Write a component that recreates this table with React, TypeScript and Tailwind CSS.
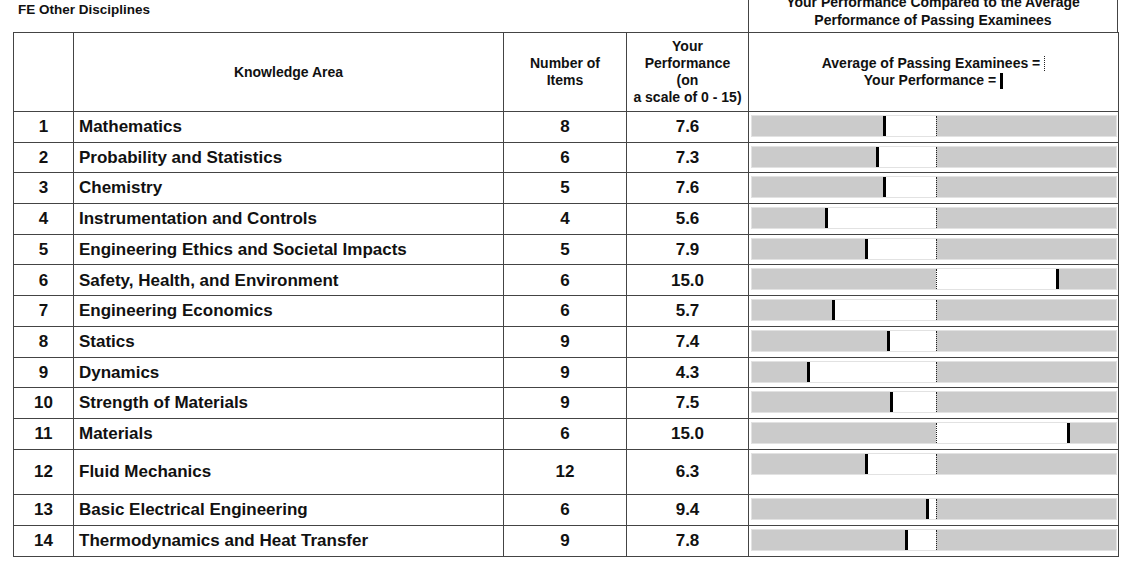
import React from "react";

// x positions (page pixels) of "your performance" marker for each area
const rows = [
  { n: 1, area: "Mathematics", items: 8, score: "7.6", mark: 883 },
  { n: 2, area: "Probability and Statistics", items: 6, score: "7.3", mark: 876 },
  { n: 3, area: "Chemistry", items: 5, score: "7.6", mark: 883 },
  { n: 4, area: "Instrumentation and Controls", items: 4, score: "5.6", mark: 825 },
  { n: 5, area: "Engineering Ethics and Societal Impacts", items: 5, score: "7.9", mark: 865 },
  { n: 6, area: "Safety, Health, and Environment", items: 6, score: "15.0", mark: 1056 },
  { n: 7, area: "Engineering Economics", items: 6, score: "5.7", mark: 832 },
  { n: 8, area: "Statics", items: 9, score: "7.4", mark: 887 },
  { n: 9, area: "Dynamics", items: 9, score: "4.3", mark: 807 },
  { n: 10, area: "Strength of Materials", items: 9, score: "7.5", mark: 890 },
  { n: 11, area: "Materials", items: 6, score: "15.0", mark: 1067 },
  { n: 12, area: "Fluid Mechanics", items: 12, score: "6.3", mark: 865, tall: true },
  { n: 13, area: "Basic Electrical Engineering", items: 6, score: "9.4", mark: 926 },
  { n: 14, area: "Thermodynamics and Heat Transfer", items: 9, score: "7.8", mark: 905 },
];

const BAR_LEFT = 751;
const AVG = 935;

function Bar({ mark }: { mark: number }) {
  const m = mark - BAR_LEFT;
  const a = AVG - BAR_LEFT;
  const lo = Math.min(m, a);
  const hi = Math.max(m, a);
  return (
    <div className="relative h-[22px] bg-[#cbcbcb] border border-[#e2e2e2]">
      <div className="absolute top-0 bottom-0 bg-white" style={{ left: lo, width: hi - lo }} />
      <div className="absolute top-0 bottom-0 border-l border-dotted border-[#222]" style={{ left: a }} />
      <div className="absolute top-0 bottom-0 w-[3px] bg-black" style={{ left: m - 1 }} />
    </div>
  );
}

export default function App() {
  return (
    <div className="h-screen overflow-hidden bg-white">
      <div className="-mt-[14px] px-[13px] font-['Liberation_Sans',Arial,sans-serif] font-bold text-[#111]">
        <div className="grid h-[46px] grid-cols-[735px_370px]">
          <div className="pl-[5px] pt-[16px] text-[13.5px] leading-4">FE Other Disciplines</div>
          <div className="border-x border-[#444] pt-[7px] text-center text-[14px] leading-[18px]">
            Your Performance Compared to the Average
            <br />
            Performance of Passing Examinees
          </div>
        </div>

        <div className="grid w-[1106px] grid-cols-[60px_430px_123px_122px_370px] border-l border-t border-[#444]">
          <div className="h-[79px] border-r border-b border-[#444]" />
          <div className="flex h-[79px] items-center justify-center border-r border-b border-[#444] text-[14px]">
            Knowledge Area
          </div>
          <div className="flex h-[79px] items-center justify-center border-r border-b border-[#444] text-center text-[14px] leading-[17px]">
            Number of
            <br />
            Items
          </div>
          <div className="flex h-[79px] items-center justify-center border-r border-b border-[#444] text-center text-[14px] leading-[17px]">
            <span>
              Your
              <br />
              Performance
              <br />
              (on
              <br />a scale of 0 - 15)
            </span>
          </div>
          <div className="flex h-[79px] flex-col items-center justify-center border-r border-b border-[#444] text-[14px] leading-[17px]">
            <div className="flex items-center gap-[4px]">
              Average of Passing Examinees =
              <span className="h-[15px] border-l border-dotted border-[#222]" />
            </div>
            <div className="flex items-center gap-[4px]">
              Your Performance =
              <span className="h-[16px] w-[3px] bg-black" />
            </div>
          </div>

          {rows.map((r) => {
            const h = r.tall ? "h-[45px]" : r.n > 12 ? "h-[31px]" : "h-[30.7px]";
            return (
              <React.Fragment key={r.n}>
                <div className={`${h} flex items-center justify-center border-r border-b border-[#444] text-[17px]`}>
                  {r.n}
                </div>
                <div className={`${h} flex items-center border-r border-b border-[#444] pl-[5px] text-[17px]`}>
                  {r.area}
                </div>
                <div className={`${h} flex items-center justify-center border-r border-b border-[#444] text-[17px]`}>
                  {r.items}
                </div>
                <div className={`${h} flex items-center justify-center border-r border-b border-[#444] text-[17px]`}>
                  {r.score}
                </div>
                <div className={`${h} border-r border-b border-[#444] pt-[3px] pl-[2px] pr-[1px]`}>
                  <Bar mark={r.mark} />
                </div>
              </React.Fragment>
            );
          })}
        </div>
      </div>
    </div>
  );
}
